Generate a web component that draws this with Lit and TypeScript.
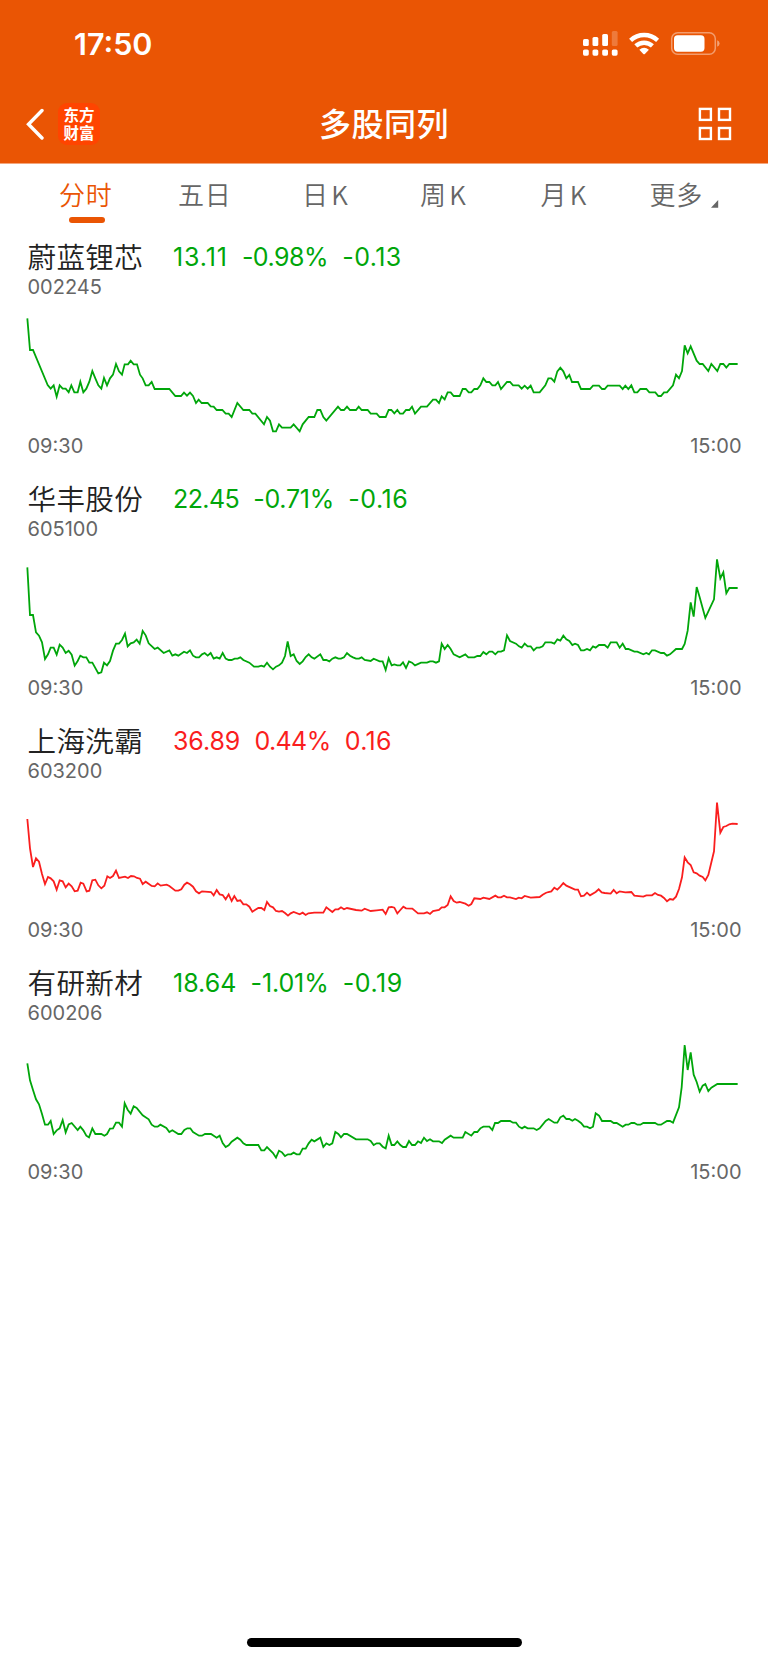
import { LitElement, html, css, svg } from "lit";
import { customElement, property } from "lit/decorators.js";
import { classMap } from "lit/directives/class-map.js";
import { styleMap } from "lit/directives/style-map.js";

interface Segment {
  dx: number;
  dy: number;
  points: string;
}

interface Stock {
  name: string;
  code: string;
  // price, percent and absolute change, each with its tracking in px
  quote: [string, number][];
  up: boolean;
  segments: Segment[];
}

const STOCKS: Stock[] = [
  {
    name: "蔚蓝锂芯",
    code: "002245",
    quote: [["13.11", 0.85], ["-0.98%", -0.5], ["-0.13", 0.4]],
    up: false,
    segments: [
      { dx: 0, dy: 0, points: "82,265 90,360 99,360 143,465 152,476 161,466 170,500 179,466 188,476 197,476 206,487 214,466 223,487 233,487 241,455 250,487 259,476 268,455 277,423 286,445 295,466 304,476 312,444 321,466 330,445 339,434 348,402 357,424 366,434 374,403 384,403 392,392 401,403 411,403 420,434 428,445 437,466 446,466 455,456 464,477 508,477 526,498 543,498 552,488 561,497 570,488 579,498 588,519 596,509 605,519 623,519 632,529 641,530 650,540 667,540 677,551 686,551 695,561 712,519 730,540 748,540 757,551 766,551 792,583 801,561 810,572 819,604 828,604 837,583 846,593 872,593 881,583 899,604 908,583 926,561 943,561 952,540 961,540 970,561 979,572 1014,530 1023,540 1032,540 1041,530 1050,540 1068,540 1076,530 1085,540 1103,540 1112,551 1130,551 1139,561 1157,561 1166,540 1174,540 1183,550 1192,540" },
      { dx: 1200, dy: 210, points: "0,341 9,341 18,330 28,330 36,320 45,341 63,320 81,320 99,299 108,299 117,309 125,289 134,298 143,277 152,277 161,288 179,288 188,267 197,267 206,277 214,277 223,267 232,267 241,256 250,235 259,246 268,246 277,256 286,256 294,246 303,267 321,246 330,246 339,256 356,256 365,266 374,257 383,266 392,257 401,277 419,277 436,256 445,235 454,235 463,245 472,214 481,203 490,214 499,235 508,225 516,246 534,246 543,267 570,267 579,257 597,257 606,267 614,267 623,257 659,257 668,267 676,257 685,267 694,256 703,277 712,277 721,267 739,267 748,277 766,277 775,288 783,288 792,277 801,277 819,256 828,224 837,235 846,213 854,136 863,160 872,139 890,182 899,192 908,192 925,213 934,192 952,213 961,192 970,192 979,203 988,192 1013,192" },
    ],
  },
  {
    name: "华丰股份",
    code: "605100",
    quote: [["22.45", -0.6], ["-0.71%", -0.25], ["-0.16", 0.5]],
    up: false,
    segments: [
      { dx: 0, dy: -6, points: "82,292 90,435 99,435 108,487 117,497 126,517 135,567 144,553 152,533 161,533 170,554 179,524 188,533 197,549 206,542 215,554 224,587 233,573 241,557 250,562 259,562 268,578 277,578 295,610 304,607 312,578 321,586 330,573 339,542 348,521 357,521 366,510 375,491 383,529 392,520 401,517 410,509 419,521 428,483 437,496 446,520 464,537 473,533 491,549 508,541 517,557 526,553 535,557 552,545 561,549 570,541 579,557 588,562 597,562 606,553 614,549 623,557 632,549 641,566 650,562 659,566 668,549 677,566 686,570 695,570 704,566 713,566 721,562 730,570 748,578 762,590 775,590 784,587 792,590 801,578 810,590 819,598 828,590 837,586 846,578 855,558 863,514 872,558 881,553 890,573 899,582 908,574 917,561 926,553 935,562 943,566 961,553 970,570 979,570 988,574 997,566 1006,562 1015,566 1023,566 1032,562 1041,549 1050,557 1059,562 1068,566 1077,566 1085,562 1094,570 1112,573 1121,566 1139,574 1148,574 1157,600 1166,565 1175,586 1183,583 1192,586" },
      { dx: 1200, dy: 204, points: "1,376 9,367 18,384 27,364 36,368 45,376 63,368 81,368 90,364 99,364 108,368 117,364 125,311 134,327 143,315 152,327 161,343 179,352 196,343 205,352 223,352 232,348 241,348 250,336 259,343 268,335 277,335 286,343 294,335 303,335 312,331 321,286 330,303 348,311 357,319 365,323 374,311 383,319 392,319 401,331 410,323 419,323 428,319 436,307 454,307 463,311 472,298 481,302 490,287 499,298 508,303 517,315 525,311 534,315 543,331 552,331 561,327 570,331 579,319 587,323 597,315 614,315 623,323 632,307 650,307 659,323 668,311 677,327 685,327 703,335 712,335 730,343 739,339 747,343 756,331 765,331 783,339 792,339 801,347 810,343 828,327 846,327 854,312 863,272 872,187 881,230 890,141 899,172 916,234 942,178 951,58 961,115 970,97 979,160 988,144 1013,144" },
    ],
  },
  {
    name: "上海洗霸",
    code: "603200",
    quote: [["36.89", -0.1], ["0.44%", -0.6], ["0.16", 0.3]],
    up: true,
    segments: [
      { dx: 0, dy: 3, points: "82,312 90,400 99,456 108,430 117,440 126,477 135,507 144,486 152,490 161,499 170,524 179,496 188,499 197,517 206,506 215,514 224,529 233,527 242,503 250,506 260,529 268,527 277,496 286,494 295,511 304,520 313,512 322,484 330,489 339,483 348,467 357,489 375,485 384,489 393,483 402,484 411,489 420,491 428,507 437,500 455,513 464,514 473,505 482,512 500,509 508,513 526,527 535,527 544,523 553,509 561,503 570,508 579,515 588,529 597,535 606,529 633,531 641,541 650,525 659,538 668,540 677,553 686,538 695,558 703,543 712,558 721,556 730,568 739,568 748,575 757,590 766,584 775,579 784,579 793,585 801,561 810,573 819,577 828,588 837,590 846,588 855,594 864,602 872,595 881,591 899,598 908,593 917,600 925,595 943,593 970,593 979,577 997,591 1006,583 1015,583 1023,577 1032,583 1041,579 1068,585 1085,587 1094,581 1112,588 1130,586 1148,584 1157,597 1166,577 1175,576 1183,578 1192,595" },
      { dx: 1200, dy: 228, points: "1,360 10,350 18,355 37,356 54,370 72,370 81,367 90,372 99,363 117,360 125,352 134,352 143,345 152,319 161,333 170,338 179,336 196,341 206,347 214,342 223,325 241,327 250,323 268,327 286,317 294,322 303,322 312,317 321,322 330,322 348,327 356,323 365,325 374,318 392,323 419,321 428,314 437,309 445,306 454,304 463,293 472,299 481,290 490,279 499,287 525,299 534,299 543,319 552,317 561,308 570,316 587,306 596,298 605,307 614,309 632,311 641,300 650,310 659,304 676,307 694,306 703,317 730,320 739,316 756,316 765,309 774,315 783,317 792,324 801,334 810,327 819,329 828,320 837,297 846,262 854,202 863,217 872,225 881,247 890,250 899,257 908,261 916,271 925,255 942,184 951,38 961,128 970,111 979,108 988,103 997,101 1013,102" },
    ],
  },
  {
    name: "有研新材",
    code: "600206",
    quote: [["18.64", 0], ["-1.01%", -0.1], ["-0.19", 0.5]],
    up: false,
    segments: [
      { dx: 0, dy: -3, points: "82,325 90,376 99,405 108,433 117,448 126,477 135,509 144,509 152,498 161,537 170,526 179,520 188,495 197,532 206,508 215,504 233,525 241,515 250,526 259,542 267,547 277,520 286,537 304,537 313,542 321,537 330,521 339,520 348,503 357,503 366,515 374,445 383,464 392,476 401,454 410,459 428,481 446,493 455,509 464,515 473,515 481,509 499,519 508,531 517,526 535,537 544,537 553,525 562,520 571,520 579,531 597,542 606,542 615,537 633,537 650,548 659,542 668,564 677,576 686,571 695,560 712,548 721,554 730,565 739,570 775,570 784,586 793,586 801,576 819,594 828,608 837,587 846,592 855,603 864,598 873,598 881,593 890,598 899,598 908,581 917,581 926,565 935,554 943,559 961,548 970,576 979,565 988,570 997,565 1006,531 1015,537 1023,547 1032,537 1041,537 1068,553 1103,553 1112,558 1121,570 1130,565 1139,565 1148,575 1157,580 1166,542 1175,570 1183,570 1192,559" },
      { dx: 1200, dy: 222, points: "1,345 9,351 18,351 27,333 36,345 45,345 54,334 63,339 72,323 81,333 90,328 99,334 117,334 126,339 134,329 152,317 161,323 188,323 196,306 214,317 223,306 232,306 241,295 250,290 268,290 277,300 285,279 294,279 303,273 330,273 339,278 348,278 357,290 366,295 374,290 383,295 401,295 410,300 419,295 437,273 446,267 463,278 472,278 481,262 490,257 499,267 508,267 517,272 525,267 534,272 543,279 552,290 561,290 570,295 579,290 587,250 597,257 606,273 632,273 641,279 650,279 668,290 677,284 685,284 694,279 703,279 712,284 721,284 730,279 765,279 774,284 783,284 801,273 810,273 819,278 837,232 845,172 854,45 863,120 872,67 881,134 890,156 899,185 908,167 916,162 925,183 934,173 952,162 1013,162" },
    ],
  },
];

// Chart points are stored at three units per CSS pixel.
function linePoints(segments: Segment[]): string {
  return segments
    .flatMap((s) =>
      s.points.split(" ").map((p) => {
        const [x, y] = p.split(",").map(Number);
        return `${x + s.dx},${y + s.dy}`;
      })
    )
    .join(" ");
}

@customElement("stock-card")
export class StockCard extends LitElement {
  @property({ attribute: false }) stock!: Stock;

  static styles = css`
    :host {
      display: flex;
      flex-direction: column;
      height: 242px;
      color: #666;
    }
    .head {
      display: flex;
      height: 45px;
      padding-left: 27.5px;
    }
    .name {
      width: 145.5px;
      font: 350 28.6px/51px "Noto Sans CJK SC", sans-serif;
      letter-spacing: 0.3px;
      color: #222;
      white-space: nowrap;
    }
    .quote {
      display: flex;
      gap: 14.2px;
      font-size: 25px;
      line-height: 54px;
      color: #00a60a;
    }
    .quote.up {
      color: #fa1e1e;
    }
    .code {
      height: 35px;
      padding-left: 27.5px;
      font-size: 20px;
      line-height: 24px;
    }
    .chart {
      display: block;
      width: 768px;
      height: 126px;
      fill: none;
      stroke: #00a60a;
      stroke-width: 5.4;
      stroke-linejoin: miter;
      overflow: visible;
    }
    .chart.up {
      stroke: #fa1e1e;
    }
    .axis {
      display: flex;
      justify-content: space-between;
      padding: 0 26.5px 0 27.5px;
      font-size: 20px;
      line-height: 20px;
    }
  `;

  render() {
    const { name, code, quote, up, segments } = this.stock;
    return html`
      <div class="head">
        <span class="name">${name}</span>
        <div class=${classMap({ quote: true, up })}>
          ${quote.map(
            ([text, tracking]) =>
              html`<span style=${styleMap({ letterSpacing: `${tracking}px` })}>${text}</span>`
          )}
        </div>
      </div>
      <div class="code">${code}</div>
      <svg class=${classMap({ chart: true, up })} viewBox="0 240 2304 378">
        ${svg`<polyline points=${linePoints(segments)}></polyline>`}
      </svg>
      <div class="axis"><span>09:30</span><span>15:00</span></div>
    `;
  }
}

@customElement("app-root")
export class AppRoot extends LitElement {
  static styles = css`
    :host {
      display: flex;
      flex-direction: column;
      width: 768px;
      height: 1662px;
      overflow: hidden;
      background: #fff;
      font-family: Inter, "Noto Sans CJK SC", sans-serif;
    }
    .top {
      box-sizing: border-box;
      height: 164px;
      background: #ea5504;
      border-bottom: 1px solid #f4a67c;
      color: #fff;
    }
    .status {
      display: flex;
      align-items: center;
      justify-content: space-between;
      height: 88px;
      padding: 0 47px 0 74px;
    }
    .time {
      font-size: 30.5px;
      font-weight: 600;
      line-height: 88px;
    }
    .nav {
      display: grid;
      grid-template-columns: 1fr auto 1fr;
      align-items: center;
      height: 72px;
      padding: 0 36px 0 26px;
    }
    .left {
      display: flex;
      align-items: center;
      gap: 14px;
    }
    .logo {
      box-sizing: border-box;
      width: 42px;
      height: 42px;
      padding-top: 4px;
      border-radius: 9px;
      background: #ff4400;
      font: 700 15.5px/18px "Liberation Sans", "Noto Sans CJK SC", sans-serif;
      text-align: center;
    }
    .logo span {
      display: block;
      height: 18px;
    }
    .title {
      font: 500 32px/46px "Noto Sans CJK SC", sans-serif;
      letter-spacing: 0.5px;
      margin: 0 0 4px 10px;
    }
    .right {
      display: flex;
      justify-content: flex-end;
    }
    .tabs {
      display: grid;
      grid-template-columns: 119px 124px 118px 120.5px 109px 1fr;
      height: 66px;
      padding-left: 59px;
      font: 350 26px/60px "Noto Sans CJK SC", sans-serif;
      letter-spacing: 0.7px;
      color: #666;
    }
    .tab {
      white-space: nowrap;
    }
    .latin {
      margin-left: 2.5px;
    }
    .active {
      display: flex;
      flex-direction: column;
      color: #ea5504;
    }
    .label {
      height: 53px;
    }
    .bar {
      width: 36px;
      height: 6px;
      margin-left: 9.5px;
      border-radius: 3px;
      background: #ea5504;
    }
    .more {
      display: flex;
      gap: 8.5px;
    }
    .corner {
      margin-top: 36px;
    }
    .home {
      width: 275px;
      height: 9.5px;
      margin: auto auto 15px 247px;
      border-radius: 5px;
      background: #000;
    }
    svg {
      display: block;
    }
  `;

  render() {
    return html`
      <header class="top">
        <div class="status">
          <span class="time">17:50</span>
          <svg width="140" height="28" viewBox="580 30 140 28" fill="#fff">
            <rect x="582" y="39" width="5.8" height="7" rx="1.5" />
            <rect x="591.5" y="37" width="5.8" height="9" rx="1.5" />
            <rect x="601.2" y="34" width="5.8" height="12" rx="1.5" />
            <rect x="610.8" y="31" width="5.8" height="15" rx="1.5" opacity=".22" />
            <rect x="582" y="49.4" width="5.8" height="6.3" rx="1.6" />
            <rect x="591.5" y="49.4" width="5.8" height="6.3" rx="1.6" />
            <rect x="601.2" y="49.4" width="5.8" height="6.3" rx="1.6" />
            <rect x="610.8" y="49.4" width="5.8" height="6.3" rx="1.6" />
            <g fill="none" stroke="#fff" stroke-width="4.4">
              <path d="M629.6 40.3a20 20 0 0 1 27 0" />
              <path d="M634.8 45.9a12.3 12.3 0 0 1 16.6 0" />
            </g>
            <path d="M638.3 49.8q4.8-4 9.6 0L643.9 54q-.8.7-1.6 0Z" />
            <rect x="670.7" y="32.7" width="43.6" height="21.6" rx="6" fill="none" stroke="#fff" stroke-width="1.5" opacity=".42" />
            <rect x="673" y="35.3" width="30.5" height="16.4" rx="3.6" />
            <path d="M716.2 40.3q2.4 1 2.4 3.2t-2.4 3.2Z" opacity=".45" />
          </svg>
        </div>
        <div class="nav">
          <div class="left">
            <svg width="18" height="32" viewBox="0 0 18 32" fill="none" stroke="#fff" stroke-width="3.4" stroke-linecap="round">
              <path d="M16 2.5 2.5 16.2 16 30" />
            </svg>
            <div class="logo"><span>东方</span><span>财富</span></div>
          </div>
          <div class="title">多股同列</div>
          <div class="right">
            <svg width="34" height="34" viewBox="0 0 34 34" fill="none" stroke="#fff" stroke-width="2.4">
              <rect x="1.9" y="1.9" width="11" height="11" />
              <rect x="21" y="1.9" width="11" height="11" />
              <rect x="1.9" y="21" width="11" height="11" />
              <rect x="21" y="21" width="11" height="11" />
            </svg>
          </div>
        </div>
      </header>
      <nav class="tabs">
        <div class="tab active"><span class="label">分时</span><span class="bar"></span></div>
        <div class="tab">五日</div>
        <div class="tab">日<span class="latin">K</span></div>
        <div class="tab">周<span class="latin">K</span></div>
        <div class="tab">月<span class="latin">K</span></div>
        <div class="tab more">
          更多
          <svg class="corner" width="8" height="8" viewBox="0 0 8 8" fill="#666"><path d="M7.2 0V7.7H0Z" /></svg>
        </div>
      </nav>
      ${STOCKS.map((s) => html`<stock-card .stock=${s}></stock-card>`)}
      <div class="home"></div>
    `;
  }
}
